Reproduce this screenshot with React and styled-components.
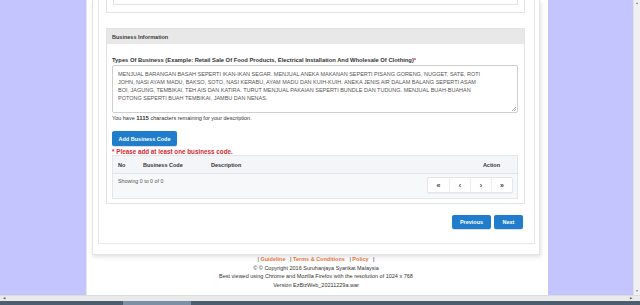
import styled, { createGlobalStyle } from "styled-components";

const GlobalStyle = createGlobalStyle`
  html, body {
    margin: 0;
    padding: 0;
    overflow: hidden;
    background: #ffffff;
  }
  body {
    font-family: "Liberation Sans", Arial, sans-serif;
    color: #333333;
  }
  * {
    box-sizing: border-box;
  }
`;

const description = [
  "MENJUAL BARANGAN BASAH SEPERTI IKAN-IKAN SEGAR. MENJUAL ANEKA MAKANAN SEPERTI PISANG GORENG, NUGGET, SATE, ROTI",
  "JOHN, NASI AYAM MADU, BAKSO, SOTO, NASI KERABU, AYAM MADU DAN KUIH-KUIH. ANEKA JENIS AIR DALAM BALANG SEPERTI ASAM",
  "BOI, JAGUNG, TEMBIKAI, TEH AIS DAN KATIRA. TURUT MENJUAL PAKAIAN SEPERTI BUNDLE DAN TUDUNG. MENJUAL BUAH-BUAHAN",
  "POTONG SEPERTI BUAH TEMBIKAI, JAMBU DAN NENAS.",
].join("\n");

const App = () => {
  return (
    <Page>
      <GlobalStyle />
      <Viewport>
        <SideBg $w={86} />
        <Main>
          <OuterBox>
            <InnerBox>
              <PrevCard>
                <PrevInner />
              </PrevCard>

              <Panel>
                <PanelHeader>Business Information</PanelHeader>
                <PanelBody>
                  <Label>
                    Types Of Business (Example: Retail Sale Of Food Products, Electrical
                    Installation And Wholesale Of Clothing)<Req>*</Req>
                  </Label>
                  <DescWrap>
                    <DescArea readOnly defaultValue={description} />
                  </DescWrap>
                  <Remaining>
                    You have <b>1115</b> characters remaining for your description.
                  </Remaining>
                  <BlueButton $w={65} $h={15} $mt={9}>
                    Add Business Code
                  </BlueButton>
                  <ErrorText>* Please add at least one business code.</ErrorText>

                  <Table>
                    <HeadRow>
                      <Col $w={25}>No</Col>
                      <Col $w={68}>Business Code</Col>
                      <Col $grow>Description</Col>
                      <Col>Action</Col>
                    </HeadRow>
                    <BodyRow>
                      <Showing>Showing 0 to 0 of 0</Showing>
                      <Pager>
                        <PageBtn>«</PageBtn>
                        <PageBtn>‹</PageBtn>
                        <PageBtn>›</PageBtn>
                        <PageBtn>»</PageBtn>
                      </Pager>
                    </BodyRow>
                  </Table>
                </PanelBody>
              </Panel>

              <NavRow>
                <BlueButton $w={39} $h={14}>Previous</BlueButton>
                <BlueButton $w={29} $h={14}>Next</BlueButton>
              </NavRow>
            </InnerBox>
          </OuterBox>

          <Footer>
            <FooterLine>
              | <FooterLink>Guideline</FooterLink> | <FooterLink>Terms &amp; Conditions</FooterLink> |{" "}
              <FooterLink>Policy</FooterLink> |
            </FooterLine>
            <FooterLine>© © Copyright 2016 Suruhanjaya Syarikat Malaysia</FooterLine>
            <FooterLine>
              Best viewed using Chrome and Mozilla Firefox with the resolution of 1024 x 768
            </FooterLine>
            <FooterLine>Version EzBizWeb_20211229a.war</FooterLine>
          </Footer>
        </Main>
        <SideBg $w={85} />
        <VScroll>
          <Arrow>▲</Arrow>
          <Arrow>▼</Arrow>
        </VScroll>
      </Viewport>
      <HScroll>
        <Arrow>◀</Arrow>
        <Arrow>▶</Arrow>
      </HScroll>
      <Taskbar>
        <TaskItem />
      </Taskbar>
    </Page>
  );
};

const Page = styled.div`
  width: 640px;
  height: 305px;
  display: flex;
  flex-direction: column;
  overflow: hidden;
`;

const Viewport = styled.div`
  display: flex;
  height: 295px;
  overflow: hidden;
`;

const SideBg = styled.div`
  width: ${(p) => p.$w}px;
  flex-shrink: 0;
  background: #c4c4fe;
`;

const Main = styled.main`
  width: 462px;
  flex-shrink: 0;
  background: #ffffff;
  border-left: 1px solid #e6e6e6;
  padding: 0 8px 0 5px;
  display: flex;
  flex-direction: column;
`;

const OuterBox = styled.section`
  border: 1px solid #e4e4e4;
  border-top: none;
  box-shadow: 1px 2px 4px rgba(0, 0, 0, 0.12);
  padding: 0 4px 10px 5px;
`;

const InnerBox = styled.div`
  border: 1px solid #e8e8e8;
  border-top: none;
  padding: 0 9px 14px 7px;
`;

const PrevCard = styled.div`
  height: 13px;
  border: 1px solid #e3e3e3;
  border-top: none;
  padding: 0 6px;
`;

const PrevInner = styled.div`
  height: 5px;
  border: 1px solid #e3e3e3;
  border-top: none;
`;

const Panel = styled.section`
  margin-top: 15px;
  border: 1px solid #e3e3e3;
`;

const PanelHeader = styled.div`
  height: 15px;
  background: #e8e8e8;
  padding-left: 5px;
  display: flex;
  align-items: center;
  font-size: 5.5px;
  font-weight: 700;
  color: #3a3a3a;
`;

const PanelBody = styled.div`
  padding: 13px 6px 4px 5px;
  display: flex;
  flex-direction: column;
  align-items: flex-start;
`;

const Label = styled.div`
  font-size: 5.8px;
  line-height: 7px;
  font-weight: 700;
  color: #333;
  margin-bottom: 1px;
  white-space: nowrap;
`;

const Req = styled.span`
  color: #d9262b;
`;

const DescWrap = styled.div`
  position: relative;
  width: 100%;
  height: 48px;
  &::after {
    content: "";
    position: absolute;
    right: 2px;
    bottom: 2px;
    width: 4px;
    height: 4px;
    background: linear-gradient(
      135deg,
      transparent 45%,
      #aaa 45%,
      #aaa 55%,
      transparent 55%,
      transparent 70%,
      #aaa 70%,
      #aaa 80%,
      transparent 80%
    );
  }
`;

const DescArea = styled.textarea`
  width: 100%;
  height: 100%;
  display: block;
  resize: none;
  overflow: hidden;
  white-space: pre;
  border: 1px solid #cfcfcf;
  border-radius: 2px;
  padding: 4px 5px;
  font-family: "Liberation Sans", Arial, sans-serif;
  font-size: 5.5px;
  line-height: 8px;
  color: #555;
  background: #fff;
  outline: none;
`;

const Remaining = styled.div`
  margin-top: 2px;
  font-size: 5.5px;
  line-height: 7px;
  color: #333;
  white-space: nowrap;
  b {
    font-size: 6px;
  }
`;

const BlueButton = styled.button`
  width: ${(p) => p.$w}px;
  height: ${(p) => p.$h}px;
  margin-top: ${(p) => p.$mt || 0}px;
  flex-shrink: 0;
  padding: 0;
  border: none;
  border-radius: 2px;
  background: #1f7dcb;
  color: #ffffff;
  font-family: "Liberation Sans", Arial, sans-serif;
  font-size: 5.5px;
  font-weight: 700;
  box-shadow: 0 1px 1px rgba(0, 0, 0, 0.15);
`;

const ErrorText = styled.div`
  margin-top: 2px;
  font-size: 6.3px;
  line-height: 7px;
  font-weight: 700;
  color: #d7282f;
  white-space: nowrap;
`;

const Table = styled.div`
  width: 100%;
  border: 1px solid #e3e6ea;
  background: #f7f8fa;
`;

const HeadRow = styled.div`
  height: 18px;
  display: flex;
  align-items: center;
  padding: 0 17px 0 5px;
  background: #f3f5f8;
  border-bottom: 1px solid #e1e4e8;
  font-size: 5.5px;
  font-weight: 700;
  color: #333;
`;

const Col = styled.div`
  ${(p) => (p.$grow ? "flex: 1;" : p.$w ? `width: ${p.$w}px;` : "")}
`;

const BodyRow = styled.div`
  height: 24px;
  display: flex;
  justify-content: space-between;
  align-items: flex-start;
  padding: 3px 4px 0 5px;
`;

const Showing = styled.div`
  margin-top: 1px;
  font-size: 5.3px;
  line-height: 7px;
  color: #555;
`;

const Pager = styled.div`
  display: flex;
  height: 16px;
  background: #fff;
  border: 1px solid #e6e6e6;
  border-radius: 2px;
  box-shadow: 0 1px 1px rgba(0, 0, 0, 0.05);
`;

const PageBtn = styled.div`
  width: 21px;
  display: flex;
  align-items: center;
  justify-content: center;
  font-size: 7px;
  font-weight: 700;
  color: #444;
  & + & {
    border-left: 1px solid #eeeeee;
  }
`;

const NavRow = styled.div`
  margin-top: 11px;
  display: flex;
  justify-content: flex-end;
  gap: 3px;
  padding-right: 2px;
`;

const Footer = styled.footer`
  display: flex;
  flex-direction: column;
  align-items: center;
`;

const FooterLine = styled.div`
  font-size: 5.5px;
  line-height: 8.6px;
  color: #333;
  white-space: nowrap;
`;

const FooterLink = styled.span`
  font-weight: 700;
  color: #e2733d;
  padding-right: 3px;
`;

const VScroll = styled.div`
  width: 7px;
  flex-shrink: 0;
  background: #f0f0f0;
  border-left: 1px solid #e2e2e2;
  display: flex;
  flex-direction: column;
  align-items: center;
  justify-content: space-between;
`;

const Arrow = styled.span`
  font-size: 3px;
  line-height: 7px;
  color: #606060;
`;

const HScroll = styled.div`
  height: 6px;
  background: #eaeaea;
  border-top: 1px solid #dcdcdc;
  display: flex;
  justify-content: space-between;
  align-items: center;
  padding: 0 8px 0 3px;
`;

const Taskbar = styled.div`
  height: 4px;
  background: #4d5d70;
  display: flex;
`;

const TaskItem = styled.div`
  width: 68px;
  margin-left: 123px;
  height: 100%;
  background: #7d8fa4;
`;

export default App;
